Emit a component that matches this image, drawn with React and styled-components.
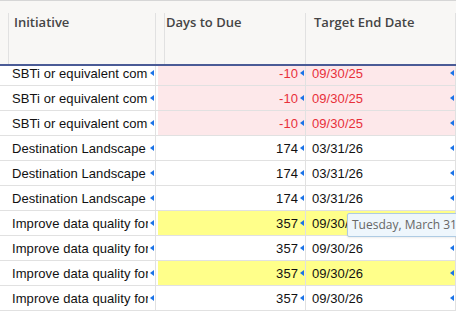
import React from "react";
import styled, { createGlobalStyle, css } from "styled-components";

/*
  page + palette
*/
const GlobalStyle = createGlobalStyle`
  html, body {
    margin: 0;
    padding: 0;
    background: #ffffff;
  }
`;

const colors = {
  grid: "#e1e1e1",
  headerBg: "#f8f7f5",
  headerText: "#454545",
  frozen: "#4a5b96",
  text: "#111111",
  red: "#e8303a",
  pink: "#fde8ea",
  yellow: "#ffff8a",
  marker: "#1a73e8"
};

const columns = "6px 150px 2px 148px 150px";

/*
  layout
*/
const Sheet = styled.div`
  position: relative;
  width: 456px;
  height: 311px;
  overflow: hidden;
  border-top: 1px solid #d6d6d6;
  box-sizing: border-box;
  background: #ffffff;
`;

const HeaderRow = styled.div`
  display: grid;
  grid-template-columns: ${columns};
  height: 65px;
  padding-top: 12px;
  box-sizing: border-box;
  background: ${colors.headerBg};
  border-bottom: 2px solid ${colors.frozen};
  position: relative;
  z-index: 1;
`;

const HeaderCell = styled.div`
  border-right: 1px solid ${colors.grid};
  padding: 1px 0 0 8px;
  font-family: "Open Sans", "Liberation Sans", sans-serif;
  font-size: 13px;
  font-weight: 600;
  line-height: 16px;
  color: ${colors.headerText};
  white-space: nowrap;
  overflow: hidden;
`;

const Body = styled.div`
  height: 245px;
  overflow: hidden;
`;

/* the sheet is scrolled a few pixels, so the first row tucks under the header */
const Rows = styled.div`
  margin-top: -5px;
`;

const Row = styled.div`
  display: grid;
  grid-template-columns: ${columns};
  height: 25px;
`;

const markerCSS = css`
  &::after {
    content: "";
    position: absolute;
    right: 1px;
    top: 50%;
    transform: translateY(-50%);
    border-top: 3px solid transparent;
    border-bottom: 3px solid transparent;
    border-right: 4px solid ${colors.marker};
  }
`;

const toneBg = {
  overdue: colors.pink,
  warn: colors.yellow
};

const Cell = styled.div`
  position: relative;
  box-sizing: border-box;
  border-right: 1px solid ${colors.grid};
  border-bottom: 1px solid ${colors.grid};
  background: ${(p) => toneBg[p.$tone] || "#ffffff"};
  display: flex;
  align-items: center;
  justify-content: ${(p) => (p.$align === "right" ? "flex-end" : "flex-start")};
  padding: 0 7px 0 6px;
  font-family: "Liberation Sans", Arial, sans-serif;
  font-size: 13px;
  letter-spacing: 0.07px;
  color: ${(p) => (p.$tone === "overdue" ? colors.red : colors.text)};
  ${(p) => p.$marker && markerCSS}
`;

const CellText = styled.span`
  display: block;
  overflow: hidden;
  white-space: nowrap;
  text-overflow: clip;
`;

const Tooltip = styled.div`
  position: absolute;
  left: 347px;
  top: 212px;
  height: 24px;
  box-sizing: border-box;
  padding: 0 6px 0 4px;
  border: 1px solid #aecbe3;
  border-radius: 2px;
  background: #eef6fc;
  box-shadow: 0 1px 2px rgba(0, 0, 0, 0.08);
  font-family: "Open Sans", "Liberation Sans", sans-serif;
  font-size: 12px;
  line-height: 22px;
  color: #666666;
  white-space: nowrap;
  z-index: 2;
`;

/*
  data
*/
const rows = [
  { name: "SBTi or equivalent commitment", days: -10, date: "09/30/25", tone: "overdue" },
  { name: "SBTi or equivalent commitment", days: -10, date: "09/30/25", tone: "overdue" },
  { name: "SBTi or equivalent commitment", days: -10, date: "09/30/25", tone: "overdue" },
  { name: "Destination Landscape Review", days: 174, date: "03/31/26" },
  { name: "Destination Landscape Review", days: 174, date: "03/31/26" },
  { name: "Destination Landscape Review", days: 174, date: "03/31/26" },
  { name: "Improve data quality for reporting", days: 357, date: "09/30/26", tone: "warn" },
  { name: "Improve data quality for reporting", days: 357, date: "09/30/26" },
  { name: "Improve data quality for reporting", days: 357, date: "09/30/26", tone: "warn" },
  { name: "Improve data quality for reporting", days: 357, date: "09/30/26" }
];

const App = () => {
  return (
    <>
      <GlobalStyle />
      <Sheet>
        <HeaderRow>
          <HeaderCell />
          <HeaderCell>Initiative</HeaderCell>
          <HeaderCell />
          <HeaderCell>Days to Due</HeaderCell>
          <HeaderCell>Target End Date</HeaderCell>
        </HeaderRow>
        <Body>
          <Rows>
            {rows.map((row, i) => (
              <Row key={i}>
                <Cell />
                <Cell $marker>
                  <CellText>{row.name}</CellText>
                </Cell>
                <Cell />
                <Cell $tone={row.tone} $align="right" $marker>
                  <CellText>{row.days}</CellText>
                </Cell>
                <Cell $tone={row.tone} $marker>
                  <CellText>{row.date}</CellText>
                </Cell>
              </Row>
            ))}
          </Rows>
        </Body>
        <Tooltip>Tuesday, March 31, 2026</Tooltip>
      </Sheet>
    </>
  );
};

export default App;
